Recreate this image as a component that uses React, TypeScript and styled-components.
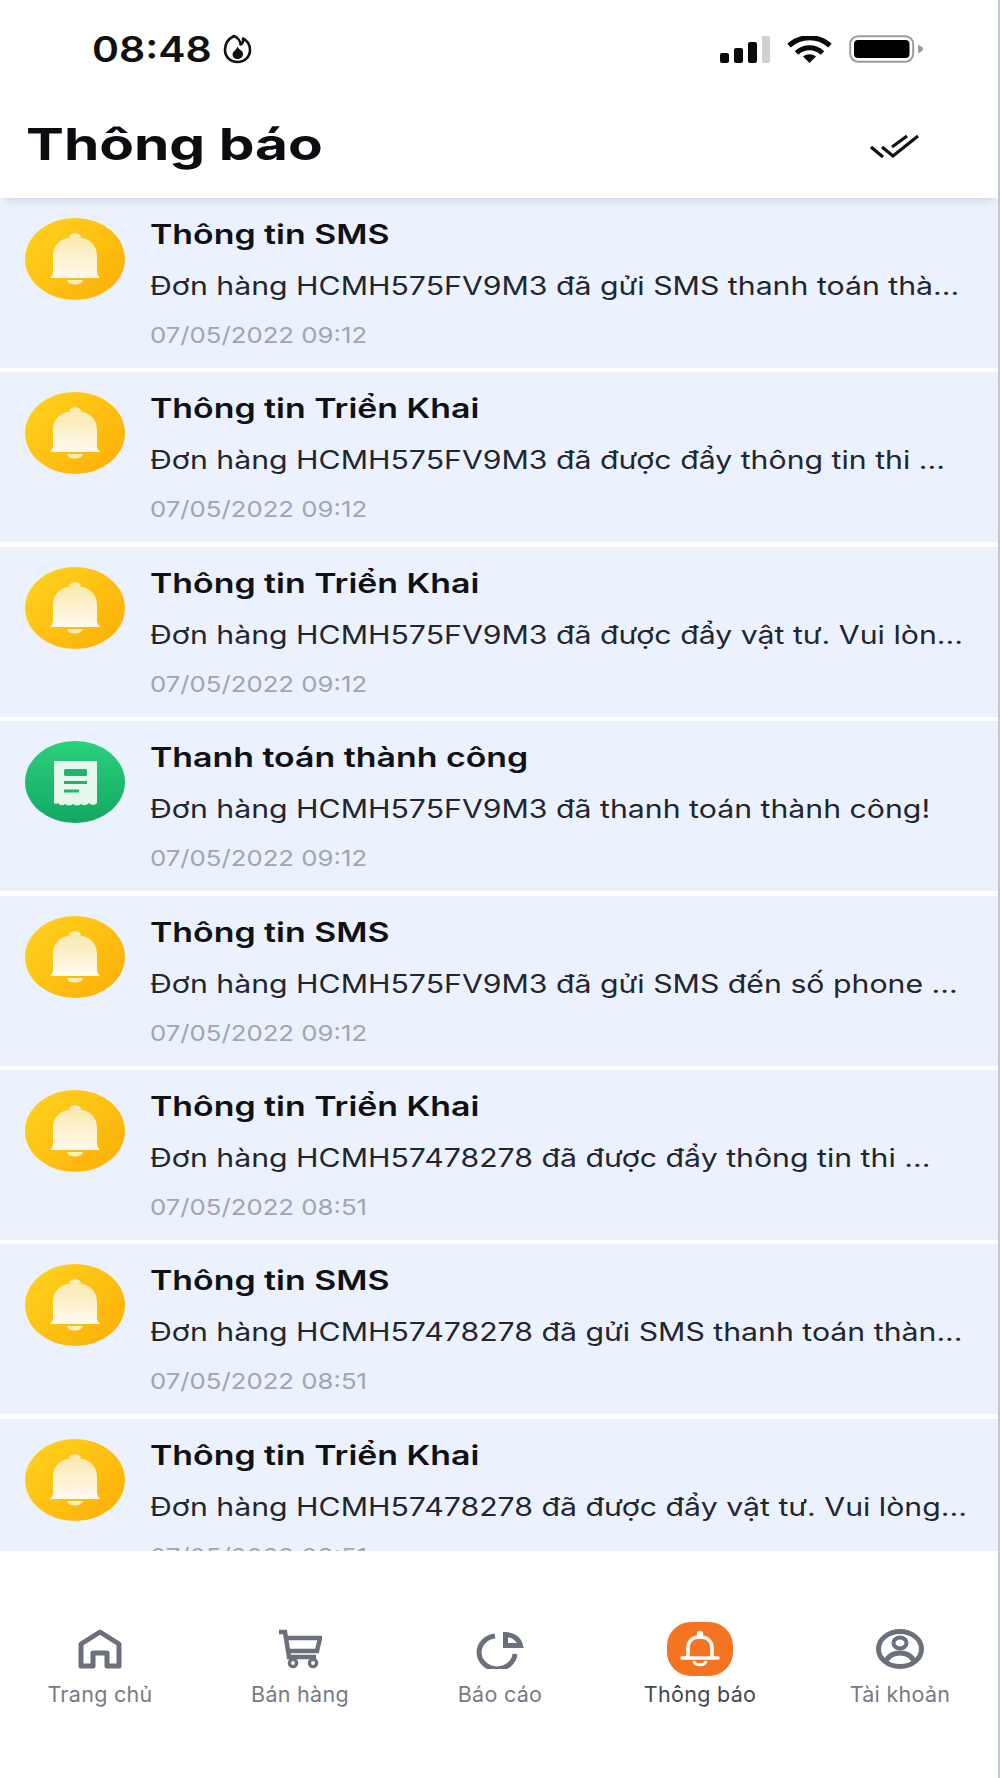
import { FC } from "react";
import styled, { createGlobalStyle } from "styled-components";

const GlobalStyle = createGlobalStyle`
  html, body {
    margin: 0;
    padding: 0;
    background: #fff;
    font-family: Inter, "Noto Sans", sans-serif;
  }
`;

// whole phone screen
const Screen = styled.div`
  width: 1000px;
  height: 1778px;
  box-sizing: border-box;
  display: flex;
  flex-direction: column;
  background: #fff;
  border-right: 2px solid #c4c7cd;
  overflow: hidden;
`;

const StatusBar = styled.div`
  height: 98px;
  flex: none;
  display: flex;
  align-items: center;
  justify-content: space-between;
  padding: 0 75px 0 92px;
  box-sizing: border-box;
`;

const Clock = styled.div`
  display: flex;
  align-items: center;
  gap: 12px;
`;

// the screenshot is stretched sideways, so the text is too
const ClockTime = styled.span`
  display: inline-block;
  margin-right: 17px;
  font-size: 35px;
  font-weight: 600;
  color: #111;
  transform: scaleX(1.17);
  transform-origin: left center;
`;

const StatusIcons = styled.div`
  display: flex;
  align-items: center;
  gap: 17px;
`;

const Header = styled.div`
  height: 100px;
  flex: none;
  display: flex;
  align-items: center;
  justify-content: space-between;
  padding: 0 78px 4px 26px;
  box-sizing: border-box;
  background: #fff;
  position: relative;
  z-index: 1;
  box-shadow: 0 7px 9px -5px rgba(90, 100, 130, 0.22);
`;

const Title = styled.h1`
  margin: 0 0 5px;
  font-size: 44px;
  font-weight: 700;
  color: #0c0d10;
  transform: scaleX(1.29);
  transform-origin: left center;
`;

// scrolling list, last row gets cut off by the tab bar
const List = styled.div`
  flex: 1;
  min-height: 0;
  overflow: hidden;
  display: flex;
  flex-direction: column;
  gap: 4.4px;
`;

const Row = styled.div`
  height: 170px;
  flex: none;
  display: flex;
  gap: 25px;
  padding: 20px 0 0 25px;
  box-sizing: border-box;
  background: #ecf2fd;
`;

const Avatar = styled.div<{ $kind: "bell" | "receipt" }>`
  width: 100px;
  height: 82px;
  flex: none;
  border-radius: 50%;
  background: ${(p) =>
    p.$kind === "bell"
      ? "linear-gradient(135deg, #ffd31f 0%, #fdae05 100%)"
      : "linear-gradient(180deg, #2bd07c 0%, #12a862 100%)"};
  svg {
    display: block;
  }
`;

const RowText = styled.div`
  display: flex;
  flex-direction: column;
  white-space: nowrap;
  min-width: 0;
  padding-top: 1px;
`;

const RowTitle = styled.div`
  font-size: 27px;
  line-height: 32px;
  font-weight: 600;
  color: #101114;
  transform: scaleX(1.254);
  transform-origin: left center;
`;

const RowBody = styled.div`
  font-size: 25px;
  line-height: 30px;
  margin-top: 20px;
  color: #22262e;
  transform: scaleX(1.21);
  transform-origin: left center;
`;

const RowDate = styled.div`
  font-size: 22px;
  line-height: 26px;
  margin-top: 21px;
  color: #a1a5af;
  transform: scaleX(1.17);
  transform-origin: left center;
`;

const TabBar = styled.div`
  height: 227px;
  flex: none;
  display: grid;
  grid-template-columns: repeat(5, 200px);
  padding-top: 71px;
  box-sizing: border-box;
  background: #fff;
`;

const Tab = styled.div<{ $active?: boolean }>`
  display: flex;
  flex-direction: column;
  align-items: center;
  font-size: 21.5px;
  color: ${(p) => (p.$active ? "#43474f" : "#777a85")};
`;

const TabIcon = styled.div`
  height: 54px;
  display: flex;
  align-items: center;
  justify-content: center;
`;

const ActiveIcon = styled.div`
  width: 66px;
  height: 54px;
  border-radius: 24px;
  background: #f47421;
  display: flex;
  align-items: center;
  justify-content: center;
`;

const TabLabel = styled.div`
  margin-top: 5px;
  line-height: 26px;
  letter-spacing: 0.3px;
`;

const FlameIcon = () => (
  <svg width="29" height="30" viewBox="0 0 29 30" fill="none">
    <path d="M11 2 C6 4.5 2 9.5 2 16 C2 23 7.5 28 14.5 28 C21.5 28 27 23 27 16 C27 10.5 24 6.5 20 4.5 C20.5 7.5 19.5 9.5 17.5 10.5 C17.5 7 14.5 3.5 11 2 Z" stroke="#111" strokeWidth="2.6" strokeLinejoin="round" />
    <path d="M14.5 12.5 C15.5 15.5 20 16 20 20 C20 23 17.5 25 14.5 25 C11.5 25 9.5 23 9.5 20.5 C9.5 17.5 13.5 16 14.5 12.5 Z" fill="#111" />
  </svg>
);

const SignalIcon = () => (
  <svg width="50" height="27" viewBox="0 0 50 27">
    <rect x="0" y="17" width="9" height="10" rx="2" fill="#0a0a0a" />
    <rect x="14" y="12" width="9" height="15" rx="2" fill="#0a0a0a" />
    <rect x="28" y="6" width="9" height="21" rx="2" fill="#0a0a0a" />
    <rect x="42" y="0" width="8" height="27" rx="2" fill="#cfd0d2" />
  </svg>
);

const WifiIcon = () => (
  <svg width="45" height="27" viewBox="0 0 45 27" fill="none">
    <path d="M2 9.5 C14 -1 31 -1 43 9.5" stroke="#0a0a0a" strokeWidth="5" />
    <path d="M9.5 17 C17 10 28 10 35.5 17" stroke="#0a0a0a" strokeWidth="5" />
    <path d="M16 20.5 C20 17.5 25 17.5 29 20.5 L22.5 27 Z" fill="#0a0a0a" />
  </svg>
);

const BatteryIcon = () => (
  <svg width="74" height="28" viewBox="0 0 74 28" fill="none">
    <rect x="1.2" y="1.2" width="63" height="25.6" rx="8" stroke="#9b9c9f" strokeWidth="2" />
    <rect x="5" y="5" width="55.5" height="18" rx="4" fill="#000" />
    <path d="M69 10 C72 11 74 12 74 14 C74 16 72 17 69 18 Z" fill="#9b9c9f" />
  </svg>
);

const DoubleCheckIcon = () => (
  <svg width="50" height="26" viewBox="0 0 50 26" fill="none" stroke="#111" strokeWidth="3.2">
    <path d="M1 14 L13 24" />
    <path d="M12 14 L23 23 L48 3" />
    <path d="M22 14 L37 3" />
  </svg>
);

const BellBadge = () => (
  <svg width="100" height="82" viewBox="0 0 100 82">
    <defs>
      <linearGradient id="bellFill" x1="0" y1="0" x2="0" y2="1">
        <stop offset="0" stopColor="#fbe9ae" />
        <stop offset="1" stopColor="#fffaf0" />
      </linearGradient>
    </defs>
    <path d="M44 19 C45 14 55 14 56 19 Z" fill="#fdeebc" />
    <path d="M28 55 V38 C28 26 37 19 50 19 C63 19 72 26 72 38 V55 Q73 58 75 60 H25 Q27 58 28 55 Z" fill="url(#bellFill)" />
    <path d="M42 62 H58 C57 68 43 68 42 62 Z" fill="#fdeebc" />
  </svg>
);

const ReceiptBadge = () => (
  <svg width="100" height="82" viewBox="0 0 100 82">
    <path d="M29 20 H72 V62 Q68 66 64 62 Q60 66 56 63 Q52 66 48 63 Q44 66 40 63 Q36 66 33 62 Q31 64 29 62 Z" fill="#e6f8ec" />
    <rect x="39" y="28" width="23" height="7" rx="1.5" fill="#1fb56d" />
    <rect x="39" y="40" width="23" height="3" fill="#1fb56d" />
    <rect x="39" y="48.5" width="15" height="3" fill="#1fb56d" />
  </svg>
);

const HomeIcon = () => (
  <svg width="44" height="40" viewBox="0 0 44 40" fill="none" stroke="#6c6f7c" strokeWidth="5" strokeLinejoin="round">
    <path d="M3 37 V15 L22 3 L41 15 V37 H29 V24 H15 V37 Z" />
  </svg>
);

const CartIcon = () => (
  <svg width="44" height="40" viewBox="0 0 44 40" fill="none" stroke="#6c6f7c" strokeWidth="4.5">
    <path d="M1 3 H7 L11 28 H38" />
    <path d="M8 9 H42 L39 22 H10" />
    <circle cx="15" cy="34" r="3.6" strokeWidth="3.4" />
    <circle cx="35" cy="34" r="3.6" strokeWidth="3.4" />
  </svg>
);

const PieIcon = () => (
  <svg width="48" height="40" viewBox="0 0 48 40" fill="none" stroke="#6c6f7c" strokeWidth="5">
    <path d="M19 7 A18 16.5 0 1 0 39 25" />
    <path d="M29.5 5.5 C37 5.5 43 10 44.5 16.5 H29.5 Z" />
  </svg>
);

const BellIcon = () => (
  <svg width="40" height="38" viewBox="0 0 40 38" fill="none" stroke="#fff" strokeWidth="3.6">
    <circle cx="20" cy="4" r="2.4" fill="#fff" strokeWidth="1.6" />
    <path d="M8 27 V18 C8 11 13 7 20 7 C27 7 32 11 32 18 V27" />
    <path d="M2 28 H38" strokeLinecap="round" />
    <path d="M14 31 C15 36 25 36 26 31" strokeWidth="3" />
  </svg>
);

const UserIcon = () => (
  <svg width="48" height="40" viewBox="0 0 48 40" fill="none" stroke="#6c6f7c" strokeWidth="5">
    <ellipse cx="24" cy="20" rx="21.5" ry="17.5" />
    <ellipse cx="24" cy="14" rx="6.5" ry="5.5" strokeWidth="4" />
    <path d="M10 32 C13 26 18 24 24 24 C30 24 35 26 38 32" />
  </svg>
);

type Notification = { kind: "bell" | "receipt"; title: string; body: string; date: string };

const notifications: Notification[] = [
  { kind: "bell", title: "Thông tin SMS", body: "Đơn hàng HCMH575FV9M3 đã gửi SMS thanh toán thà...", date: "07/05/2022 09:12" },
  { kind: "bell", title: "Thông tin Triển Khai", body: "Đơn hàng HCMH575FV9M3 đã được đẩy thông tin thi ...", date: "07/05/2022 09:12" },
  { kind: "bell", title: "Thông tin Triển Khai", body: "Đơn hàng HCMH575FV9M3 đã được đẩy vật tư. Vui lòn...", date: "07/05/2022 09:12" },
  { kind: "receipt", title: "Thanh toán thành công", body: "Đơn hàng HCMH575FV9M3 đã thanh toán thành công!", date: "07/05/2022 09:12" },
  { kind: "bell", title: "Thông tin SMS", body: "Đơn hàng HCMH575FV9M3 đã gửi SMS đến số phone ...", date: "07/05/2022 09:12" },
  { kind: "bell", title: "Thông tin Triển Khai", body: "Đơn hàng HCMH57478278 đã được đẩy thông tin thi ...", date: "07/05/2022 08:51" },
  { kind: "bell", title: "Thông tin SMS", body: "Đơn hàng HCMH57478278 đã gửi SMS thanh toán thàn...", date: "07/05/2022 08:51" },
  { kind: "bell", title: "Thông tin Triển Khai", body: "Đơn hàng HCMH57478278 đã được đẩy vật tư. Vui lòng...", date: "07/05/2022 08:51" },
];

const App: FC = () => {
  return (
    <Screen>
      <GlobalStyle />
      <StatusBar>
        <Clock>
          <ClockTime>08:48</ClockTime>
          <FlameIcon />
        </Clock>
        <StatusIcons>
          <SignalIcon />
          <WifiIcon />
          <BatteryIcon />
        </StatusIcons>
      </StatusBar>
      <Header>
        <Title>Thông báo</Title>
        <DoubleCheckIcon />
      </Header>
      <List>
        {notifications.map((n, i) => (
          <Row key={i}>
            <Avatar $kind={n.kind}>{n.kind === "bell" ? <BellBadge /> : <ReceiptBadge />}</Avatar>
            <RowText>
              <RowTitle>{n.title}</RowTitle>
              <RowBody>{n.body}</RowBody>
              <RowDate>{n.date}</RowDate>
            </RowText>
          </Row>
        ))}
      </List>
      <TabBar>
        <Tab>
          <TabIcon><HomeIcon /></TabIcon>
          <TabLabel>Trang chủ</TabLabel>
        </Tab>
        <Tab>
          <TabIcon><CartIcon /></TabIcon>
          <TabLabel>Bán hàng</TabLabel>
        </Tab>
        <Tab>
          <TabIcon><PieIcon /></TabIcon>
          <TabLabel>Báo cáo</TabLabel>
        </Tab>
        <Tab $active>
          <ActiveIcon><BellIcon /></ActiveIcon>
          <TabLabel>Thông báo</TabLabel>
        </Tab>
        <Tab>
          <TabIcon><UserIcon /></TabIcon>
          <TabLabel>Tài khoản</TabLabel>
        </Tab>
      </TabBar>
    </Screen>
  );
};

export default App;
